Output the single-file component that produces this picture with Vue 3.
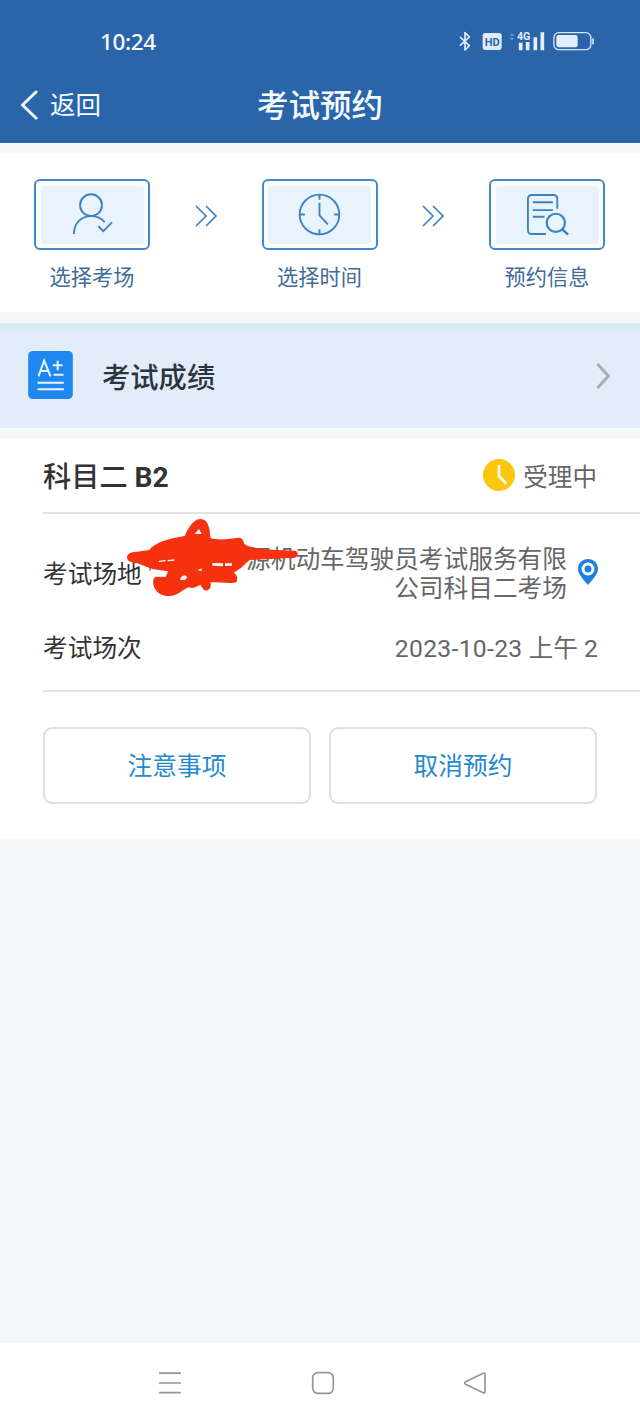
<script setup>
const steps = [
  { key: 'site', label: '选择考场' },
  { key: 'time', label: '选择时间' },
  { key: 'info', label: '预约信息' },
]
const actions = ['注意事项', '取消预约']
</script>

<template>
  <div class="phone">
    <header class="header">
      <div class="status">
        <span class="clock">10:24</span>
        <svg class="status-icons" viewBox="0 0 450 75" fill="none">
          <path d="M9 21 37 47 24 60V8L37 21 9 47" stroke="#e3efff" stroke-width="5" stroke-linejoin="round" />
          <rect x="77" y="9" width="57" height="51" rx="8" fill="#e0ecfb" />
          <text x="105.500" y="47" class="hd">HD</text>
          <path d="m158 17 7-7 7 7M158 24l7 7 7-7" fill="#6f9bcd" />
          <text x="180" y="30" class="g4">4G</text>
          <path d="M191 38v23M212 36v25M235 22v39M256 7v54" stroke="#e3efff" stroke-width="11" />
          <rect x="290.500" y="8" width="111" height="51" rx="15" stroke="#d6e6fa" stroke-width="4" />
          <rect x="298" y="15" width="64" height="37" rx="7" fill="#e3efff" />
          <path d="M408 25v18" stroke="#d6e6fa" stroke-width="5" />
        </svg>
      </div>
      <div class="titlebar">
        <div class="back">
          <svg viewBox="0 0 18 30" fill="none"><path d="M16 2 2.500 15 16 28" stroke="#f2f8ff" stroke-width="3" stroke-linecap="round" stroke-linejoin="round" /></svg>
          <span>返回</span>
        </div>
        <h1>考试预约</h1>
      </div>
    </header>

    <section class="steps">
      <template v-for="(step, i) in steps" :key="step.key">
        <svg v-if="i" class="next" viewBox="0 0 22 22" fill="none" stroke="#3f83c4" stroke-width="1.700">
          <path d="M1 1 11 11 1 21M11 1 21 11 11 21" />
        </svg>
        <div class="step">
          <div class="frame">
            <div class="panel">
              <svg viewBox="0 0 44 44" fill="none" stroke="#3b82c4" stroke-width="1.900">
                <g v-if="step.key === 'site'">
                  <circle cx="20.500" cy="12.500" r="11.200" />
                  <path d="M3 42C3.300 30 11 23.700 20.500 23.700c6 0 11 2.500 14 6.200M28 34l5 5 9-9" />
                </g>
                <g v-else-if="step.key === 'time'">
                  <circle cx="22" cy="22" r="20.300" />
                  <path d="M22 2v5M22 37v5M2 22h5M37 22h5M22 10v13l8.500 9" />
                </g>
                <g v-else>
                  <path d="M20.500 42H6c-2.500 0-4-1.500-4-4V6c0-2.500 1.500-4 4-4h22c2.500 0 4 1.500 4 4v10M7 9.500h20.500M7 17.500h20.500M7 24.300h12" />
                  <circle cx="30.500" cy="30.500" r="9.300" stroke-width="2.200" />
                  <path d="m37 37 6 5.500" stroke-width="2.500" />
                </g>
              </svg>
            </div>
          </div>
          <span class="step-label">{{ step.label }}</span>
        </div>
      </template>
    </section>

    <section class="score">
      <svg class="score-icon" viewBox="0 0 134 144" fill="none">
        <rect width="134" height="144" rx="14" fill="#1e87f0" />
        <path d="m31 76 17-47 19 47M37 60h24M74 43h29M88.500 29v29M76 71h30M28 95h79M28 115h79" stroke="#e8f6ff" stroke-width="6" />
      </svg>
      <span>考试成绩</span>
      <svg class="chevron" viewBox="0 0 14 26" fill="none"><path d="M1.500 1 12.500 13 1.500 25" stroke="#a6adb8" stroke-width="3" /></svg>
    </section>

    <section class="card">
      <div class="subject">
        <h2>科目二 <b>B2</b></h2>
        <div class="state">
          <svg viewBox="0 0 32 32" fill="none"><circle cx="16" cy="16" r="16" fill="#fbc70c" /><path d="M16 7v10l6.500 7" stroke="#fffdf0" stroke-width="2.700" stroke-linecap="round" stroke-linejoin="round" /></svg>
          <span>受理中</span>
        </div>
      </div>
      <div class="details">
        <div class="row place">
          <span class="name">考试场地</span>
          <div class="address">源机动车驾驶员考试服务有限<br>公司科目二考场</div>
          <svg class="pin" viewBox="0 0 20 26"><path fill="#1e7fe0" fill-rule="evenodd" d="M10 0C4.300 0 0 4.300 0 9.700 0 15 5 20 10 26c5-6 10-11 10-16.300C20 4.300 15.700 0 10 0m0 3.500a6.500 6.500 0 1 1 0 13 6.500 6.500 0 0 1 0-13" /><circle cx="10" cy="10" r="3.500" fill="#1e7fe0" /></svg>
        </div>
        <div class="row session">
          <span class="name">考试场次</span>
          <span class="value"><span class="date">2023-10-23</span> 上午 2</span>
        </div>
      </div>
      <div class="actions">
        <button v-for="action in actions" :key="action" type="button">{{ action }}</button>
      </div>
      <svg class="scribble" viewBox="0 0 900 600">
        <path d="M360 196v16M622 190v16" stroke="#777" stroke-width="4" />
        <path fill="#f5310f" d="M291 173C291 161 303 155 322 155L358 150C372 130 407 117 464 108C472 91 487 58 511 57C533 56 540 82 541 114C565 121 589 118 613 115C630 110 640 114 642 131L655 139L701 148L788 152C800 151 804 156 803 165C800 175 787 176 774 174L710 178L660 180C645 190 636 205 611 218C622 224 624 235 619 247C605 252 570 247 541 247C545 260 539 271 526 272C518 269 514 258 512 255C505 256 496 264 487 264L475 262C460 268 443 288 419 288C394 289 377 276 371 257C367 239 371 230 381 230L407 231L414 214L367 207L322 190C301 187 293 183 291 173Z" />
        <path fill="#fff" d="M494 102h21l-8-15ZM387 182v4l20-2v-4ZM413 180v4l20-2v-4ZM451 235v5l15-1 6-8-6-5-9 2ZM502 211l13 2v-8ZM547 189v8l32 2v-9ZM585 190v8l21-1v-7Z" />
      </svg>
    </section>

    <main class="blank"></main>

    <nav class="nav">
      <svg viewBox="0 0 24 24"><path d="M1 2.200h22M1 12h22M1 21.700h22" /></svg>
      <svg viewBox="0 0 24 24"><rect x="1.700" y="1.700" width="20.600" height="20.600" rx="5" /></svg>
      <svg viewBox="0 0 24 24"><path d="M20.300 2.200 3 10.500q-2.500 1.500 0 3l17.300 8.300q1.700.8 1.700-1.300v-17q0-2-1.700-1.300Z" /></svg>
    </nav>
  </div>
</template>

<style>
body { margin: 0; background: #f4f8fa; }
</style>

<style scoped>
* { box-sizing: border-box; }
.phone { width: 640px; height: 1422px; display: flex; flex-direction: column; background: #f4f8fa; font-family: Roboto, "Noto Sans CJK SC", sans-serif; color: #333; overflow: hidden; }
svg { display: block; flex: none; }
h1, h2 { margin: 0; }
.header { height: 143px; background: #2b65a9; color: #f5faff; flex: none; }
.status { height: 66px; padding: 17px 40px 0 100px; display: flex; align-items: center; justify-content: space-between; }
.clock { font: 500 22.500px/30px "Noto Sans", sans-serif; letter-spacing: -.4px; }
.status-icons { width: 150px; height: 25px; margin-top: 1px; margin-right: -7px; }
.hd { font: 700 33px Roboto, sans-serif; fill: #2b65a9; text-anchor: middle; }
.g4 { font: 700 32px Roboto, sans-serif; fill: #e3efff; }
.titlebar { height: 77px; display: grid; grid-template-columns: 1fr auto 1fr; align-items: center; padding-left: 20px; }
.back { display: flex; align-items: center; gap: 12px; font-size: 25.500px; line-height: 36px; }
.back span { padding-top: 1px; }
.back svg { width: 18px; height: 30px; }
h1 { font-size: 31.500px; font-weight: 500; line-height: 44px; padding-top: 5px; padding-right: 20px; }
.steps { height: 169px; border-top: 10px solid #f5f7fb; background: #fff; display: flex; justify-content: space-between; padding: 26px 35px 0 34px; flex: none; }
.next { width: 22px; height: 22px; margin-top: 26px; }
.step { width: 116px; display: flex; flex-direction: column; align-items: center; }
.frame { width: 116px; height: 71px; border: 2px solid #4489c5; border-radius: 6px; padding: 4.500px; background: #fafeff; }
.panel { height: 100%; background: #e9f3fd; border-radius: 3px; display: flex; justify-content: center; align-items: center; }
.panel svg { width: 43px; height: 43px; }
.step-label { font-size: 21.200px; line-height: 30px; margin-top: 13px; color: #416b98; }
.score { margin-top: 11px; height: 105px; padding: 0 30px 0 28px; background: linear-gradient(#dcecf7 0, #dcecf7 6px, #e3edf9 12px); display: flex; align-items: center; flex: none; font-size: 28.300px; font-weight: 500; color: #2c3440; }
.score-icon { width: 45px; height: 48px; margin-right: 29px; margin-top: -1px; }
.chevron { width: 14px; height: 26px; margin-left: auto; }
.card { position: relative; margin-top: 10px; height: 401px; background: #fff; padding-left: 43px; flex: none; }
.subject { height: 76px; display: flex; justify-content: space-between; align-items: center; padding-right: 43px; border-bottom: 2px solid #e3e3e3; }
h2 { font-size: 28.200px; font-weight: 500; line-height: 40px; padding-top: 5px; }
h2 b { font-weight: 700; }
.state { display: flex; align-items: center; gap: 8px; font-size: 24.600px; color: #666; }
.state svg { width: 32px; height: 32px; }
.details { height: 178px; border-bottom: 2px solid #e3e3e3; padding: 30px 42px 0 0; font-size: 24.700px; }
.row { display: flex; align-items: center; }
.place { height: 58px; }
.place .name { margin-top: -3px; }
.address { margin-left: auto; padding-top: 4px; text-align: right; color: #666; line-height: 28.800px; }
.pin { width: 20px; height: 26px; margin-left: 11px; margin-top: -3px; }
.session { margin-top: 26px; height: 36px; justify-content: space-between; }
.value { color: #666; }
.date { letter-spacing: .3px; }
.actions { padding: 35px 43px 0 0; display: grid; grid-template-columns: 1fr 1fr; gap: 18px; }
button { height: 77px; padding: 3px 0 0; border: 2px solid #dfdfdf; border-radius: 9px; background: #fff; color: #2589ce; font: 400 24.700px/36px Roboto, "Noto Sans CJK SC", sans-serif; }
.scribble { position: absolute; left: 30px; top: 62px; width: 300px; height: 200px; }
.blank { flex: 1; }
.nav { height: 79px; background: #fff; display: flex; justify-content: space-between; align-items: center; padding: 1px 153px 0 158px; }
.nav svg { width: 24px; height: 24px; fill: none; stroke: #969696; stroke-width: 1.700; }
</style>
